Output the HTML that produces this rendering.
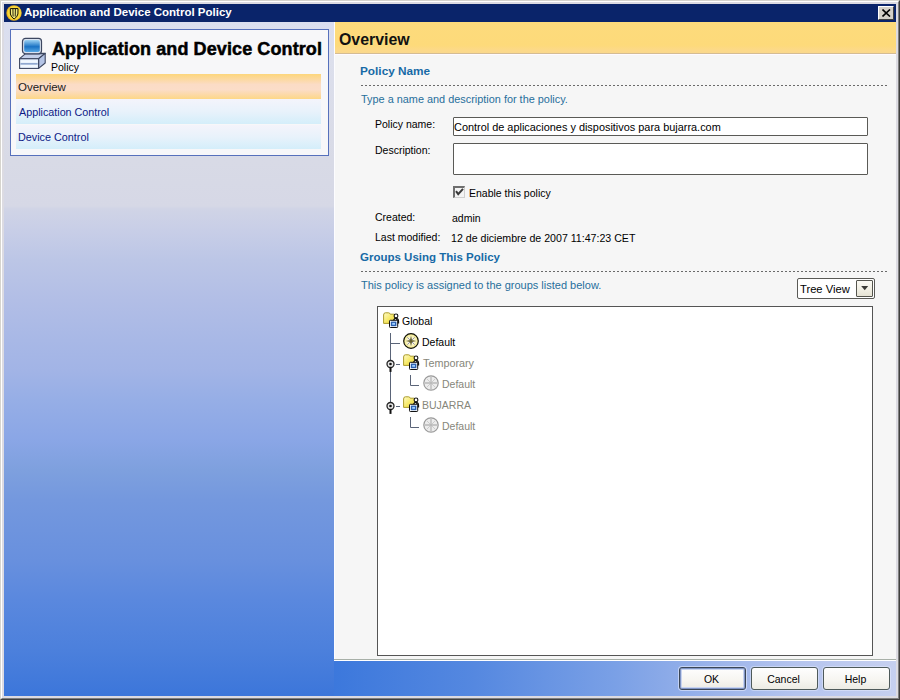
<!DOCTYPE html>
<html><head><meta charset="utf-8">
<style>
*{margin:0;padding:0;box-sizing:border-box}
html,body{width:900px;height:700px;overflow:hidden;background:#dcdbe2;font-family:"Liberation Sans",sans-serif;}
.a{position:absolute;white-space:nowrap;line-height:1}
#f1{position:absolute;left:0;top:0;width:900px;height:700px;border-left:1px solid #d6d4ce;border-top:1px solid #d6d4ce;border-right:1px solid #404040;border-bottom:1px solid #404040;}
#f2{position:absolute;left:1px;top:1px;width:898px;height:698px;border-left:1px solid #fff;border-top:1px solid #fff;border-right:1px solid #808080;border-bottom:1px solid #808080;}
#title{left:4px;top:4px;width:892px;height:18px;background:#0a246a;}
#close{left:878px;top:6px;width:16px;height:14px;background:#d4d0c8;border-top:1px solid #fff;border-left:1px solid #fff;border-right:1px solid #404040;border-bottom:1px solid #404040;}
#left{left:4px;top:22px;width:330px;height:674px;background:linear-gradient(to bottom,#dadef0 0px,#dcdfec 38px,#d8dae6 138px,#d6d8e6 184px,#d0d4e6 187px,#c8cee7 208px,#bcc6e6 238px,#b2bee6 278px,#a8b8e6 318px,#a2b4e6 348px,#96aee6 378px,#8aa6e6 418px,#7ea0de 448px,#7498de 478px,#6890de 538px,#5a88de 578px,#4c80dc 628px,#3c76da 674px);}
#box{left:10px;top:29px;width:319px;height:127px;background:#f7f7f9;border:1px solid #5670bc;}
#right{left:334px;top:22px;width:562px;height:639px;background:#f6f6f6;border-bottom:1px solid #fff;border-left:1px solid #fcfcff;}
#rline{left:334px;top:659px;width:562px;height:1px;background:#a8b0a8;}
#hdr{left:335px;top:22px;width:561px;height:32px;background:linear-gradient(#fddb7c 0%,#fdda7a 75%,#fcd98a 92%,#fad88c 100%);border-bottom:1px solid #d4bc94;box-shadow:0 1px 0 #fffaff;}
#bottom{left:334px;top:661px;width:562px;height:35px;background:linear-gradient(to right,#3c78dc 0%,#5588e0 25%,#7aa0e6 50%,#9cb4ea 68%,#b4c4ee 82%,#c6d0f0 100%);}
.sec{font-size:11.5px;font-weight:bold;color:#176aa6}
.dots{position:absolute;height:1px;background:repeating-linear-gradient(to right,#6a6a6a 0 2px,transparent 2px 4px)}
.teal{font-size:10.9px;color:#276f9c}
.lbl{font-size:10.5px;color:#000}
.inp{position:absolute;background:#fff;border:1px solid #5a5a56;border-radius:1px}
.btn{position:absolute;height:23px;border:1px solid #4e5a5a;border-radius:3px;background:linear-gradient(#fefefe,#f6f5f0 60%,#ecebe4);font-size:10.5px;text-align:center;line-height:23px;color:#000}
.row{position:absolute;left:16px;width:305px;height:25px}
.gray{color:#86867a}
</style></head><body>
<div id="f1"></div>
<div id="f2"></div>

<div id="title" class="a"></div>
<svg class="a" style="left:6px;top:5px" width="16" height="16" viewBox="0 0 16 16">
  <circle cx="8" cy="8" r="7.7" fill="#e8b020"/>
  <circle cx="8.3" cy="7.8" r="6.9" fill="#f8d838"/>
  <path d="M4.3 3.6 L12 3.6 L11.9 9 Q11.4 12 8.1 14 Q4.9 12 4.4 9 Z" fill="#f4ec80" stroke="#100c00" stroke-width="1"/>
  <path d="M6.9 4 L7.1 11.6 M9.4 4 L9.2 11.6" stroke="#100c00" stroke-width="0.9"/>
</svg>
<div class="a" style="left:24px;top:7px;color:#fff;font-weight:bold;font-size:11.5px">Application and Device Control Policy</div>
<div id="close" class="a"></div>
<svg class="a" style="left:882px;top:9px" width="9" height="8" viewBox="0 0 9 8"><path d="M0.5 0.5 L8 7.5 M8 0.5 L0.5 7.5" stroke="#000" stroke-width="1.6"/></svg>

<div id="left" class="a"></div>
<div id="box" class="a"></div>
<!-- computer icon -->
<svg class="a" style="left:15px;top:34px" width="36" height="38" viewBox="0 0 36 38">
  <defs>
    <linearGradient id="scr" x1="0" y1="0" x2="0" y2="1"><stop offset="0" stop-color="#9ad0f2"/><stop offset="0.55" stop-color="#1a72c4"/><stop offset="1" stop-color="#58a8e4"/></linearGradient>
  </defs>
  <path d="M4.6 24.7 L10.5 19.6 L30.2 19.4 L23.6 24.7 Z" fill="#c4d0ea" stroke="#3c4660" stroke-width="1.1" stroke-linejoin="round"/>
  <path d="M23.6 24.7 L30.2 19.4 L30.2 29 L23.6 34.4 Z" fill="#b4c4e6" stroke="#3c4660" stroke-width="1.1" stroke-linejoin="round"/>
  <rect x="4.6" y="24.7" width="19" height="9.7" fill="#dce8f8" stroke="#3c4660" stroke-width="1.1"/>
  <rect x="5.6" y="26.2" width="17" height="2.4" fill="#f2f8ff"/>
  <rect x="5.6" y="29" width="17" height="1.6" fill="#90a8d0"/>
  <rect x="5.6" y="31" width="17" height="2.4" fill="#f2f8ff"/>
  <rect x="7.5" y="4.4" width="19" height="15.4" rx="3" fill="#d8e2f0" stroke="#3c4660" stroke-width="1.2"/>
  <rect x="9.2" y="6.1" width="15.6" height="12" rx="1.8" fill="url(#scr)"/>
</svg>
<div class="a" style="left:52px;top:40px;font-size:18px;font-weight:bold;color:#000;-webkit-text-stroke:0.5px #000;letter-spacing:0.1px">Application and Device Control</div>
<div class="a" style="left:51px;top:62px;font-size:10.5px;color:#000">Policy</div>

<div class="row" style="top:74px;background:linear-gradient(#fdd67c 0%,#fcd9a2 22%,#fbdcc6 42%,#fbddc8 62%,#fcd9a4 84%,#fdd786 100%)"></div>
<div class="a lbl" style="left:18px;top:82px;font-size:11.5px;color:#1a1a1a">Overview</div>
<div class="row" style="top:99px;height:25px;background:linear-gradient(#f4f4fb 0%,#e8f2fb 50%,#d4eefa 100%)"></div>
<div class="a" style="left:19px;top:107px;font-size:10.75px;color:#0c1a86">Application Control</div>
<div class="row" style="top:125px;height:24px;background:linear-gradient(#f4f4fb 0%,#e8f2fb 50%,#d4eefa 100%)"></div>
<div class="a" style="left:18px;top:132px;font-size:10.8px;color:#0c1a86">Device Control</div>

<div id="right" class="a"></div>
<div id="rline" class="a"></div>
<div id="hdr" class="a"></div>
<div class="a" style="left:339px;top:32px;font-size:15.9px;font-weight:bold;color:#111">Overview</div>

<div class="a sec" style="left:360px;top:66px;font-size:11.8px">Policy Name</div>
<div class="dots" style="left:361px;top:85px;width:526px"></div>
<div class="a teal" style="left:361px;top:94px">Type a name and description for the policy.</div>

<div class="a lbl" style="left:375px;top:119px">Policy name:</div>
<div class="inp" style="left:453px;top:117px;width:415px;height:19px"></div>
<div class="a" style="left:454px;top:122px;font-size:10.92px;color:#000">Control de aplicaciones y dispositivos para bujarra.com</div>
<div class="a lbl" style="left:375px;top:145px">Description:</div>
<div class="inp" style="left:453px;top:143px;width:415px;height:32px"></div>

<div class="a" style="left:453px;top:186px;width:12px;height:12px;background:#f4f4f4;border-left:2px solid #6e6e6e;border-top:2px solid #6e6e6e;border-right:1px solid #d0d0d0;border-bottom:1px solid #d0d0d0"></div>
<svg class="a" style="left:453px;top:186px" width="12" height="12" viewBox="0 0 12 12"><path d="M3 5.2 L5.2 8.2 L10 2.8" fill="none" stroke="#3a3a3a" stroke-width="2"/></svg>
<div class="a lbl" style="left:469px;top:188px">Enable this policy</div>

<div class="a lbl" style="left:375px;top:212px">Created:</div>
<div class="a lbl" style="left:452px;top:213px">admin</div>
<div class="a lbl" style="left:375px;top:232px">Last modified:</div>
<div class="a lbl" style="left:451px;top:233px;font-size:10.62px">12 de diciembre de 2007 11:47:23 CET</div>

<div class="a sec" style="left:360px;top:252px">Groups Using This Policy</div>
<div class="dots" style="left:361px;top:271px;width:526px"></div>
<div class="a teal" style="left:361px;top:280px;font-size:11px">This policy is assigned to the groups listed below.</div>

<div class="inp" style="left:797px;top:278px;width:78px;height:21px;border-radius:2px"></div>
<div class="a" style="left:800px;top:284px;font-size:11.2px;color:#000">Tree View</div>
<div class="a" style="left:856px;top:280px;width:17px;height:17px;border:1px solid #55554e;border-radius:1px;background:linear-gradient(#fbfaf4,#f0eee2 60%,#e6e3d4)"></div>
<svg class="a" style="left:861px;top:286px" width="8" height="5" viewBox="0 0 8 5"><path d="M0.2 0 L7.2 0 L3.7 4.2 Z" fill="#3a3a36"/></svg>

<div class="a" style="left:377px;top:306px;width:496px;height:350px;background:#fff;border:1px solid #555"></div>
<svg class="a" style="left:0;top:0" width="900" height="700" viewBox="0 0 900 700">
  <defs>
    <linearGradient id="fold" x1="0" y1="0" x2="1" y2="1"><stop offset="0" stop-color="#fffbc8"/><stop offset="0.55" stop-color="#f6e864"/><stop offset="1" stop-color="#e6cc40"/></linearGradient>
    <g id="grp">
      <path d="M0.6 3 Q0.6 0.8 2.4 0.8 L5.6 0.8 Q6.8 0.8 7.2 2.2 L10.8 2.2 Q11.6 2.2 11.6 3 L11.6 11.4 L0.6 11.4 Z" fill="url(#fold)" stroke="#aa9a2c" stroke-width="1"/>
      <circle cx="13" cy="3.9" r="1.9" fill="#fff" stroke="#111" stroke-width="1.1"/>
      <path d="M10.2 10.5 Q10.4 6.4 13 6.4 Q15.6 6.4 15.6 9.5 L15.6 11 L10.2 11 Z" fill="#fff" stroke="#111" stroke-width="1.1"/>
      <path d="M13.2 6.8 Q15.2 7 15.2 9.5 L15.2 11 L13.2 11 Z" fill="#111"/>
      <rect x="6.5" y="8.3" width="8.2" height="7.2" rx="0.8" fill="#fff" stroke="#111" stroke-width="1"/>
      <rect x="7.8" y="9.6" width="5.6" height="4.6" fill="#2a5fb0"/>
      <rect x="9.2" y="10.9" width="2.8" height="1.9" fill="#9fd0ff"/>
    </g>
    <radialGradient id="yg" cx="0.5" cy="0.5" r="0.5"><stop offset="0" stop-color="#ffffff"/><stop offset="0.55" stop-color="#fbf6c8"/><stop offset="1" stop-color="#f0e680"/></radialGradient>
    <g id="pol">
      <circle cx="8" cy="8" r="7.3" fill="url(#yg)" stroke="#101008" stroke-width="1.2"/>
      <path d="M4.3 4.3 L11.7 11.7 M11.7 4.3 L4.3 11.7" stroke="#7a7ea8" stroke-width="0.8"/>
      <path d="M8 2.8 L9.3 8 L8 13.2 L6.7 8 Z M2.8 8 L8 6.7 L13.2 8 L8 9.3 Z" fill="#66602e"/>
    </g>
    <g id="polg">
      <circle cx="8" cy="8" r="7.2" fill="#ececec" stroke="#9a9a9a" stroke-width="1.2"/>
      <path d="M3.8 3.8 L12.2 12.2 M12.2 3.8 L3.8 12.2" stroke="#c8c8c8" stroke-width="0.9"/>
      <path d="M8 2 L8 14 M2 8 L14 8" stroke="#b8b8b8" stroke-width="1.3"/>
    </g>
    <g id="exp">
      <circle cx="0" cy="0" r="3.5" fill="#e8e8e8" stroke="#222" stroke-width="1.3"/>
      <circle cx="0" cy="0" r="1.3" fill="#111"/>
      <rect x="-1" y="3.3" width="2" height="4.6" fill="#111"/>
    </g>
  </defs>
  <use href="#grp" x="383" y="312"/>
  <path d="M390.5 333 L390.5 402 M391 343.5 L400 343.5 M396 364.5 L400 364.5 M396 406.5 L400 406.5" stroke="#5a6478" stroke-width="1" fill="none"/>
  <use href="#pol" x="403" y="333"/>
  <use href="#exp" x="390.5" y="364"/>
  <use href="#grp" x="403" y="354"/>
  <path d="M410.5 375 L410.5 385.5 L419 385.5" stroke="#5a6478" stroke-width="1" fill="none"/>
  <use href="#polg" x="423" y="375"/>
  <use href="#exp" x="390.5" y="406"/>
  <use href="#grp" x="403" y="396"/>
  <path d="M410.5 417 L410.5 427.5 L419 427.5" stroke="#5a6478" stroke-width="1" fill="none"/>
  <use href="#polg" x="423" y="417"/>
</svg>
<div class="a lbl" style="left:402px;top:316px">Global</div>
<div class="a lbl" style="left:422px;top:337px">Default</div>
<div class="a lbl gray" style="left:423px;top:358px;font-size:10.8px">Temporary</div>
<div class="a lbl gray" style="left:442px;top:379px">Default</div>
<div class="a lbl gray" style="left:422px;top:400px">BUJARRA</div>
<div class="a lbl gray" style="left:442px;top:421px">Default</div>

<div id="bottom" class="a"></div>
<div class="btn" style="left:679px;top:667px;width:67px;border-color:#3a4656;box-shadow:inset 0 0 0 1px #7f94c4, inset 0 0 0 2px #c8d4f0, 0 0 0 1px rgba(236,240,255,0.55);padding-right:2px">OK</div>
<div class="btn" style="left:751px;top:667px;width:67px;padding-right:2px;box-shadow:0 0 0 1px rgba(236,240,255,0.45)">Cancel</div>
<div class="btn" style="left:823px;top:667px;width:67px;padding-right:2px;box-shadow:0 0 0 1px rgba(236,240,255,0.45)">Help</div>
</body></html>
